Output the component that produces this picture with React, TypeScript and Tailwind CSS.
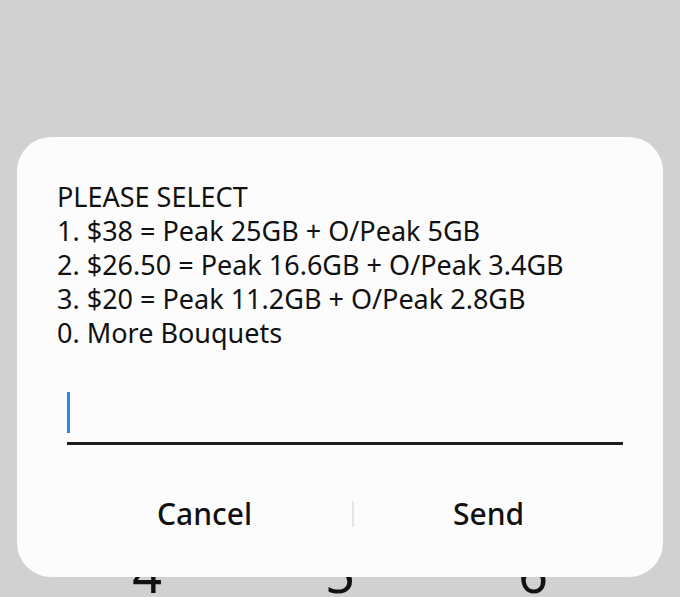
import React from "react";

export default function App() {
  const lines = [
    "PLEASE SELECT",
    "1. $38 = Peak 25GB + O/Peak 5GB",
    "2. $26.50 = Peak 16.6GB + O/Peak 3.4GB",
    "3. $20 = Peak 11.2GB + O/Peak 2.8GB",
    "0. More Bouquets",
  ];
  return (
    <div
      className="relative h-[597px] w-[680px] overflow-hidden bg-[#d1d1d1] pt-[137px] px-[17px]"
      style={{ fontFamily: '"Noto Sans", sans-serif' }}
    >
      <div className="relative z-10 flex h-[440px] flex-col rounded-[34px] bg-[#fcfcfc] pl-[40px] pr-[40px] pt-[43px]">
        <div className="text-[27px] leading-[34px] text-[#111111]">
          {lines.map((l) => (
            <div key={l}>{l}</div>
          ))}
        </div>
        <div className="ml-[10px] mt-[42px] flex h-[53px] items-start border-b-[3px] border-[#1e1e1e]">
          <div className="h-[41px] w-[3px] bg-[#2b8ae0]" />
        </div>
        <div className="mt-[46px] flex items-center">
          <div className="w-[295px] text-center text-[30px] font-medium text-[#111111]">Cancel</div>
          <div className="h-[26px] w-[2px] bg-[#e4e4e4]" />
          <div className="flex-1 text-center text-[30px] font-medium text-[#111111]">Send</div>
        </div>
      </div>
      <div className="-mt-[30px] flex text-[52px] leading-none text-[#111111]">
        <div className="w-[90px]" />
        <div className="w-[80px] text-center">4</div>
        <div className="w-[113px]" />
        <div className="w-[80px] text-center">5</div>
        <div className="w-[113px]" />
        <div className="w-[80px] text-center">6</div>
      </div>
    </div>
  );
}
